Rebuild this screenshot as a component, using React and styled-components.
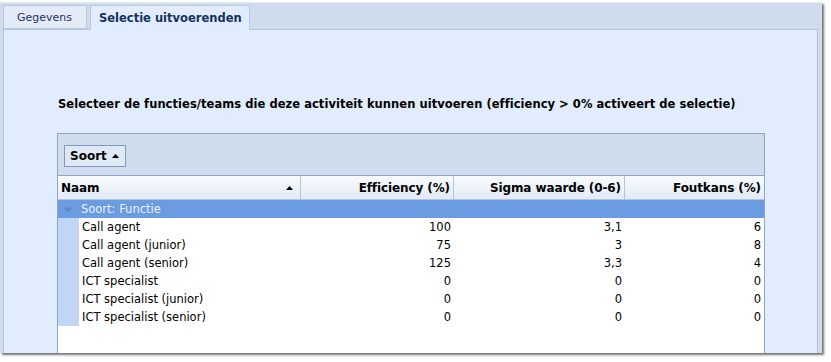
import React from "react";
import styled, { createGlobalStyle } from "styled-components";

const Global = createGlobalStyle`
  html, body { margin: 0; padding: 0; background: #ffffff; }
  body { font-family: "DejaVu Sans", Verdana, sans-serif; }
  #root { width: 831px; height: 362px; overflow: hidden; }
`;

const Window = styled.div`
  margin: 2px 0 0 0;
  width: 822px;
  height: 351px;
  background: #cfdcee;
  border-top: 1px solid #e6edf7;
  box-sizing: border-box;
  box-shadow: 2px 2px 2px rgba(0, 0, 0, 0.55);
  display: flex;
  flex-direction: column;
  overflow: hidden;
`;

const TabStrip = styled.div`
  display: flex;
  align-items: flex-end;
  gap: 3px;
  padding: 2px 0 0 3px;
  height: 26px;
  box-sizing: border-box;
  position: relative;
  z-index: 1;
`;

const Tab = styled.div`
  height: ${(p) => (p.$active ? "25px" : "24px")};
  margin-bottom: ${(p) => (p.$active ? "-1px" : "0")};
  padding: 0 ${(p) => (p.$active ? "7px" : "14px")} 0 ${(p) => (p.$active ? "8px" : "13px")};
  display: flex;
  align-items: center;
  box-sizing: border-box;
  border: 1px solid #b9c8dc;
  border-bottom: ${(p) => (p.$active ? "none" : "1px solid #b9c8dc")};
  background: ${(p) => (p.$active ? "#e1edfd" : "#e3ebf6")};
  font-size: ${(p) => (p.$active ? "11.5px" : "11px")};
  font-weight: ${(p) => (p.$active ? "bold" : "normal")};
  color: ${(p) => (p.$active ? "#15325e" : "#1b3560")};
`;

const Panel = styled.div`
  flex: 1;
  margin: 0 4px 0 3px;
  background: #e1edfd;
  border: 1px solid #b4c4d9;
  border-bottom: none;
  padding: 67px 0 0 53px;
  display: flex;
  flex-direction: column;
  overflow: hidden;
`;

const Instruction = styled.div`
  font-size: 11.5px;
  font-weight: bold;
  color: #000;
  letter-spacing: 0.05px;
  padding-left: 1px;
  height: 14px;
  line-height: 14px;
`;

const Grid = styled.div`
  margin-top: 22px;
  width: 706px;
  flex: 1;
  border: 1px solid #8ea5c7;
  border-bottom: none;
  background: #ffffff;
  display: flex;
  flex-direction: column;
`;

const GroupPanel = styled.div`
  height: 42px;
  flex: none;
  background: #cfdcee;
  border-bottom: 1px solid #8ea5c7;
  display: flex;
  align-items: center;
  padding-left: 6px;
  padding-top: 2px;
  box-sizing: border-box;
`;

const SortButton = styled.div`
  height: 22px;
  padding: 0 6px 0 5px;
  box-sizing: border-box;
  border: 1px solid #7f99c0;
  background: #dfe9f6;
  display: flex;
  align-items: center;
  gap: 5px;
  font-size: 12px;
  font-weight: bold;
  color: #000;
`;

const HeaderRow = styled.div`
  display: grid;
  grid-template-columns: 243px 153px 171px 1fr;
  height: 24px;
  flex: none;
  background: linear-gradient(#f8fafd, #e3ebf6);
  border-bottom: 1px solid #b4c4d9;
  box-sizing: border-box;
`;

const HeaderCell = styled.div`
  display: flex;
  align-items: center;
  justify-content: ${(p) => (p.$right ? "flex-end" : "space-between")};
  padding: 0 ${(p) => (p.$right ? "3px" : "7px")} 0 3px;
  border-right: ${(p) => (p.$last ? "none" : "1px solid #b4c4d9")};
  font-size: 12px;
  font-weight: bold;
  letter-spacing: -0.1px;
  color: #000;
`;

const GroupRow = styled.div`
  height: 18px;
  flex: none;
  background: #6b9be0;
  display: flex;
  align-items: center;
  color: #eaf1fc;
  font-size: 11.5px;
`;

const Chevron = styled.svg`
  width: 20px;
  flex: none;
  margin-right: 3px;
`;

const Body = styled.div`
  display: flex;
  flex: 1;
`;

const Indent = styled.div`
  width: 21px;
  align-self: flex-start;
  height: ${(p) => p.$rows * 18}px;
  background: #c0d6f4;
`;

const Rows = styled.div`
  flex: 1;
  display: flex;
  flex-direction: column;
`;

const DataRow = styled.div`
  display: grid;
  grid-template-columns: 222px 153px 171px 1fr;
  height: 18px;
  align-items: center;
  font-size: 11.5px;
  color: #000;
`;

const Cell = styled.div`
  padding: ${(p) => (p.$right ? "0 3px 0 0" : "0 0 0 3px")};
  text-align: ${(p) => (p.$right ? "right" : "left")};
  white-space: nowrap;
`;

const SortArrow = () => (
  <svg width="7" height="4" viewBox="0 0 7 4">
    <path d="M0 4 L3.5 0 L7 4 Z" fill="#000" />
  </svg>
);

const data = [
  ["Call agent", "100", "3,1", "6"],
  ["Call agent (junior)", "75", "3", "8"],
  ["Call agent (senior)", "125", "3,3", "4"],
  ["ICT specialist", "0", "0", "0"],
  ["ICT specialist (junior)", "0", "0", "0"],
  ["ICT specialist (senior)", "0", "0", "0"],
];

export default function App() {
  return (
    <>
      <Global />
      <Window>
        <TabStrip>
          <Tab>Gegevens</Tab>
          <Tab $active>Selectie uitvoerenden</Tab>
        </TabStrip>
        <Panel>
          <Instruction>
            Selecteer de functies/teams die deze activiteit kunnen uitvoeren (efficiency &gt; 0% activeert de selectie)
          </Instruction>
          <Grid>
            <GroupPanel>
              <SortButton>
                Soort <SortArrow />
              </SortButton>
            </GroupPanel>
            <HeaderRow>
              <HeaderCell>
                Naam <SortArrow />
              </HeaderCell>
              <HeaderCell $right>Efficiency (%)</HeaderCell>
              <HeaderCell $right>Sigma waarde (0-6)</HeaderCell>
              <HeaderCell $right $last>Foutkans (%)</HeaderCell>
            </HeaderRow>
            <GroupRow>
              <Chevron height="18" viewBox="0 0 20 18">
                <path d="M7 7.5 L10 10.5 L13 7.5" fill="none" stroke="#5a7fb8" strokeWidth="1.6" />
              </Chevron>
              Soort: Functie
            </GroupRow>
            <Body>
              <Indent $rows={data.length} />
              <Rows>
                {data.map((r) => (
                  <DataRow key={r[0]}>
                    <Cell>{r[0]}</Cell>
                    <Cell $right>{r[1]}</Cell>
                    <Cell $right>{r[2]}</Cell>
                    <Cell $right>{r[3]}</Cell>
                  </DataRow>
                ))}
              </Rows>
            </Body>
          </Grid>
        </Panel>
      </Window>
    </>
  );
}
